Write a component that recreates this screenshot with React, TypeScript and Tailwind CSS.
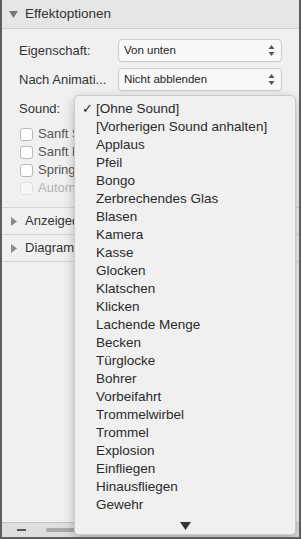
import React from "react";

const sounds = [
  "[Ohne Sound]",
  "[Vorherigen Sound anhalten]",
  "Applaus",
  "Pfeil",
  "Bongo",
  "Zerbrechendes Glas",
  "Blasen",
  "Kamera",
  "Kasse",
  "Glocken",
  "Klatschen",
  "Klicken",
  "Lachende Menge",
  "Becken",
  "Türglocke",
  "Bohrer",
  "Vorbeifahrt",
  "Trommelwirbel",
  "Trommel",
  "Explosion",
  "Einfliegen",
  "Hinausfliegen",
  "Gewehr",
  "Schuss",
];

function Stepper() {
  return (
    <svg width="7" height="13" viewBox="0 0 7 13" className="shrink-0">
      <path d="M3.5 1 L6.5 5 L0.5 5 Z" fill="#555" />
      <path d="M3.5 12 L6.5 8 L0.5 8 Z" fill="#555" />
    </svg>
  );
}

function Select({ value }: { value: string }) {
  return (
    <div className="flex h-[23px] w-[164px] shrink-0 items-center justify-between rounded-[4px] border border-[#cdcdcd] bg-[#f8f8f8] pl-[5px] pr-[6px] shadow-[0_1px_0_rgba(0,0,0,0.04)]">
      <span className="whitespace-nowrap text-[11.5px] text-[#222]">{value}</span>
      <Stepper />
    </div>
  );
}

function Check({ label, disabled }: { label: string; disabled?: boolean }) {
  return (
    <div className="flex h-[18px] items-center gap-[5px] pl-[18px]">
      <div
        className={
          disabled
            ? "h-[13px] w-[13px] shrink-0 rounded-[3px] border border-[#dedede] bg-[#f7f7f7]"
            : "h-[13px] w-[13px] shrink-0 rounded-[3px] border border-[#b9b9b9] bg-white"
        }
      />
      <span
        className={
          disabled
            ? "whitespace-nowrap text-[13px] text-[#b4b4b4]"
            : "whitespace-nowrap text-[13px] text-[#555]"
        }
      >
        {label}
      </span>
    </div>
  );
}

function Section({ label }: { label: string }) {
  return (
    <div className="flex h-[27px] items-center gap-[8px] border-b border-[#d6d6d6] pl-[9px]">
      <svg width="6" height="9" viewBox="0 0 6 9">
        <path d="M0 0 L6 4.5 L0 9 Z" fill="#8a8a8a" />
      </svg>
      <span className="whitespace-nowrap text-[13px] text-[#333]">{label}</span>
    </div>
  );
}

export default function App() {
  return (
    <div
      className="relative flex h-[539px] w-[301px] flex-col overflow-hidden border-x-2 border-b-[2px] border-[#5d5d5d] bg-[#f0f0f0]"
      style={{ fontFamily: '"Liberation Sans", Arial, sans-serif' }}
    >
      {/* Header */}
      <div className="flex h-[29px] shrink-0 items-center gap-[7px] border-b border-[#cfcfcf] bg-[#e6e6e6] pl-[7px]">
        <svg width="9" height="7" viewBox="0 0 9 7">
          <path d="M0 0 L9 0 L4.5 7 Z" fill="#777" />
        </svg>
        <span className="text-[13.5px] text-[#333]">Effektoptionen</span>
      </div>

      {/* Options */}
      <div className="flex flex-col gap-[6px] pt-[10px]">
        <div className="flex items-center">
          <span className="w-[116px] shrink-0 whitespace-nowrap pl-[17px] text-[13px] text-[#333]">
            Eigenschaft:
          </span>
          <Select value="Von unten" />
        </div>
        <div className="flex items-center">
          <span className="w-[116px] shrink-0 whitespace-nowrap pl-[17px] text-[13px] text-[#333]">
            Nach Animati...
          </span>
          <Select value="Nicht abblenden" />
        </div>
        <div className="flex items-center">
          <span className="w-[116px] shrink-0 whitespace-nowrap pl-[17px] text-[13px] text-[#333]">
            Sound:
          </span>
          <Select value="[Ohne Sound]" />
        </div>
      </div>

      <div className="flex flex-col pt-[5px] pb-[10px]">
        <Check label="Sanft Starten" />
        <Check label="Sanft Beenden" />
        <Check label="Springend beenden" />
        <Check label="Automatisch umkehren" disabled />
      </div>

      <div className="border-t border-[#d6d6d6]">
        <Section label="Anzeigedauer" />
        <Section label="Diagrammanimationen" />
      </div>

      <div className="flex-1" />

      {/* Bottom bar */}
      <div className="flex h-[15px] shrink-0 items-center gap-[20px] border-t border-[#c4c4c4] bg-[#dedede] pl-[15px]">
        <div className="h-[2px] w-[9px] bg-[#555]" />
        <div className="h-[4px] w-[120px] rounded-full bg-[#a9a9a9]" />
      </div>

      {/* Sound menu */}
      <div className="absolute left-[72px] top-[95px] h-[440px] w-[222px] overflow-hidden rounded-[5px] border border-[#cbcbcb] bg-[#f0f0f0] shadow-[0_4px_12px_rgba(0,0,0,0.25)]">
        <div className="flex flex-col pt-[4px]">
          {sounds.map((s, i) => (
            <div key={s} className="flex h-[18px] shrink-0 items-center">
              <span className="w-[21px] shrink-0 pl-[7px] text-[13px] text-[#222]">{i === 0 ? "✓" : ""}</span>
              <span className="whitespace-nowrap text-[13.5px] text-[#2a2a2a]">{s}</span>
            </div>
          ))}
        </div>
        <div className="absolute bottom-0 left-0 right-0 flex h-[16px] items-center justify-center bg-[#f0f0f0]">
          <svg width="11" height="8" viewBox="0 0 11 8">
            <path d="M0 0 L11 0 L5.5 8 Z" fill="#333" />
          </svg>
        </div>
      </div>
    </div>
  );
}
